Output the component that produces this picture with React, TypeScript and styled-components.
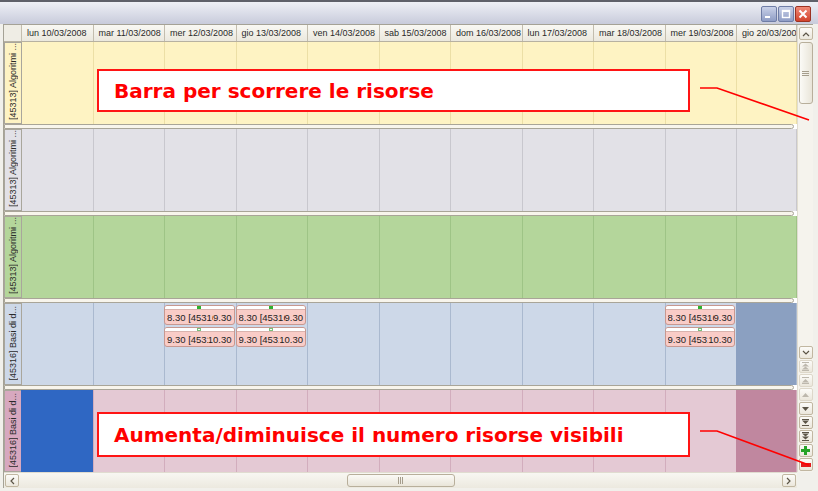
import React from 'react'
import styled, {createGlobalStyle} from 'styled-components'

const GlobalStyle = createGlobalStyle`
  *, *::before, *::after { box-sizing: border-box; }
  html, body { margin: 0; padding: 0; }
  body {
    background: #f1f0eb;
    font-family: "Liberation Sans", Arial, sans-serif;
  }
`

type Tone = 'yellow' | 'grey' | 'green' | 'blue' | 'pink'

const tones: Record<Tone, {bg: string; line: string; label: string}> = {
    yellow: {bg: '#fef3c3', line: '#ecdfa6', label: '#fef3c3'},
    grey: {bg: '#e2e1e7', line: '#c8c7ce', label: '#e2e1e7'},
    green: {bg: '#b4d69b', line: '#9ec486', label: '#b4d69b'},
    blue: {bg: '#cdd8e8', line: '#aab9cf', label: '#cdd8e8'},
    pink: {bg: '#e4c9d4', line: '#d2adbd', label: '#d7a8bf'},
}

const COLS = '18px repeat(10, 71.5px) 1fr'

const Page = styled.div`
  position: relative;
  width: 818px;
  height: 491px;
  overflow: hidden;
  background: #f1f0eb;
`

const TitleBar = styled.div`
  height: 24px;
  border-top: 2px solid #5f616a;
  background: linear-gradient(#eef0f6, #c8cbdb);
  display: flex;
  justify-content: flex-end;
  align-items: flex-end;
  gap: 1px;
  padding: 0 7px 2px 0;
`

const WinButton = styled.div<{$close?: boolean}>`
  width: 16px;
  height: 16px;
  border: 1px solid ${p => p.$close ? '#9c3222' : '#6f7da6'};
  border-radius: 2px;
  background: ${p => p.$close
    ? 'linear-gradient(#f08a78, #d2432c)'
    : 'linear-gradient(#c9d1e8, #8f9dc5)'};
  display: flex;
  align-items: center;
  justify-content: center;
`

const Frame = styled.div`
  margin-left: 3px;
  width: 810px;
  height: 464px;
  border-top: 1px solid #a5a296;
  border-left: 1px solid #a5a296;
  display: grid;
  grid-template-columns: 1fr 16px;
  grid-template-rows: 1fr 16px;
`

const Planner = styled.div`
  display: flex;
  flex-direction: column;
  overflow: hidden;
  background: #fff;
`

const HeaderRow = styled.div`
  display: grid;
  grid-template-columns: ${COLS};
  height: 17px;
  flex-shrink: 0;
  background: linear-gradient(#f9f8f3, #ebe8de);
  border-bottom: 1px solid #b7b1a1;
`

const Corner = styled.div`
  border-right: 1px solid #c3bdae;
  background: #efede5;
`

const DayHead = styled.div`
  border-right: 1px solid #c3bdae;
  padding-left: 5px;
  font-size: 9px;
  line-height: 16px;
  color: #2a2a2a;
  white-space: nowrap;
  overflow: hidden;
`

const ResourceRow = styled.div<{$tone: Tone}>`
  display: grid;
  grid-template-columns: ${COLS};
  height: 82px;
  flex-shrink: 0;
  background: ${p => tones[p.$tone].bg};
`

const RowLabel = styled.div<{$tone: Tone}>`
  background: ${p => tones[p.$tone].label};
  border: 1px solid #a9a69c;
  display: flex;
  justify-content: center;
  align-items: flex-end;
  padding-bottom: 3px;
  overflow: hidden;
`

const LabelText = styled.span`
  writing-mode: vertical-rl;
  transform: rotate(180deg);
  font-size: 9px;
  color: #2a2a2a;
  white-space: nowrap;
`

const Cell = styled.div<{$tone: Tone; $fill?: string}>`
  border-right: 1px solid ${p => tones[p.$tone].line};
  background: ${p => p.$fill || 'transparent'};
  display: flex;
  flex-direction: column;
  gap: 2px;
  padding-top: 2px;
  margin-left: -1px;
`

const Appt = styled.div`
  height: 20px;
  border: 1px solid #c79890;
  border-radius: 3px;
  background: #f9ccc7;
  display: flex;
  flex-direction: column;
  overflow: hidden;
  margin-right: 1px;
`

const ApptBar = styled.div`
  height: 4px;
  flex-shrink: 0;
  background: #fff;
  border-bottom: 1px solid #d9b3ad;
  display: flex;
  justify-content: center;
`

const ApptDot = styled.span<{$hollow?: boolean}>`
  width: 4px;
  height: 3px;
  background: ${p => p.$hollow ? '#fff' : '#2fb02f'};
  border: ${p => p.$hollow ? '1px solid #7bbf7b' : 'none'};
`

const ApptText = styled.div`
  flex: 1;
  display: flex;
  align-items: center;
  padding: 0 2px;
  font-size: 9.5px;
  color: #222;
  white-space: nowrap;
  overflow: hidden;
`

const ApptFrom = styled.span`
  flex: 1;
  min-width: 0;
  overflow: hidden;
`

const ApptTo = styled.span`
  flex-shrink: 0;
`

const Splitter = styled.div`
  height: 5px;
  flex-shrink: 0;
  background: #f8f5ec;
  border: 1px solid #a9a598;
  border-radius: 0 3px 3px 0;
  margin-right: 3px;
`

const VScroll = styled.div`
  display: flex;
  flex-direction: column;
  align-items: center;
  padding: 2px 0 1px;
  background: #f5f3ed;
  border-left: 1px solid #e0dcd0;
`

const HScroll = styled.div`
  display: grid;
  grid-template-columns: 14px 1fr 108px 1fr 14px;
  align-items: center;
  padding: 0 1px;
  background: linear-gradient(#f8f7f2, #ece9df);
  border-top: 1px solid #e0dcd0;
`

const ScrollCorner = styled.div`
  background: #f1f0eb;
`

const ScrollBtn = styled.div<{$off?: boolean; $gap?: number}>`
  width: 14px;
  height: 13px;
  flex-shrink: 0;
  margin-top: ${p => p.$gap ?? 0}px;
  border: 1px solid ${p => p.$off ? '#ddd7c9' : '#c1b7a1'};
  border-radius: 2px;
  background: linear-gradient(#fcfbf8, #ebe7dc);
  color: ${p => p.$off ? '#bdb8ad' : '#5b5446'};
  display: flex;
  align-items: center;
  justify-content: center;
`

const Thumb = styled.div<{$horizontal?: boolean}>`
  width: ${p => p.$horizontal ? '108px' : '14px'};
  height: ${p => p.$horizontal ? '13px' : '62px'};
  margin-top: ${p => p.$horizontal ? 0 : 2}px;
  border: 1px solid #b8af9b;
  border-radius: 3px;
  background: ${p => p.$horizontal
    ? 'linear-gradient(#fbfaf6, #e9e5d9)'
    : 'linear-gradient(90deg, #fbfaf6, #e9e5d9)'};
  display: flex;
  align-items: center;
  justify-content: center;
  color: #a59d8c;
`

const Filler = styled.div`
  flex: 1;
`

const Callout = styled.div<{$top: number; $height: number}>`
  position: absolute;
  left: 97px;
  top: ${p => p.$top}px;
  width: 593px;
  height: ${p => p.$height}px;
  border: 2px solid #ff1414;
  background: #fff;
  display: flex;
  align-items: center;
  padding-left: 15px;
  font-family: "DejaVu Sans", Verdana, sans-serif;
  font-weight: bold;
  font-size: 20px;
  color: #ff0000;
  white-space: nowrap;
`

const Leaders = styled.svg`
  position: absolute;
  left: 0;
  top: 0;
  pointer-events: none;
`

type IconKind = 'up' | 'down' | 'left' | 'right' | 'first' | 'pageUp' | 'stepUp' | 'stepDown' | 'pageDown' | 'last' | 'plus' | 'minus'

const Icon: React.FC<{kind: IconKind}> = ({kind}) => {
    switch (kind) {
        case 'up':
            return <svg width="8" height="6" viewBox="0 0 8 6"><polyline points="1,5 4,2 7,5" fill="none" stroke="currentColor" strokeWidth="1.2"/></svg>
        case 'down':
            return <svg width="8" height="6" viewBox="0 0 8 6"><polyline points="1,1 4,4 7,1" fill="none" stroke="currentColor" strokeWidth="1.2"/></svg>
        case 'left':
            return <svg width="6" height="8" viewBox="0 0 6 8"><polyline points="5,1 2,4 5,7" fill="none" stroke="currentColor" strokeWidth="1.2"/></svg>
        case 'right':
            return <svg width="6" height="8" viewBox="0 0 6 8"><polyline points="1,1 4,4 1,7" fill="none" stroke="currentColor" strokeWidth="1.2"/></svg>
        case 'first':
            return <svg width="7" height="9" viewBox="0 0 7 9" fill="currentColor"><rect x="0" y="0" width="7" height="1"/><path d="M3.5 1.5 L7 4.5 H0Z"/><path d="M3.5 4.5 L7 7.5 H0Z"/><rect x="0" y="8" width="7" height="1"/></svg>
        case 'pageUp':
            return <svg width="7" height="7" viewBox="0 0 7 7" fill="currentColor"><rect x="0" y="0" width="7" height="1"/><path d="M3.5 2 L7 5.5 H0Z"/><rect x="0" y="6" width="7" height="1"/></svg>
        case 'stepUp':
            return <svg width="7" height="4" viewBox="0 0 7 4" fill="currentColor"><path d="M3.5 0 L7 4 H0Z"/></svg>
        case 'stepDown':
            return <svg width="7" height="4" viewBox="0 0 7 4" fill="currentColor"><path d="M0 0 H7 L3.5 4Z"/></svg>
        case 'pageDown':
            return <svg width="7" height="7" viewBox="0 0 7 7" fill="currentColor"><rect x="0" y="0" width="7" height="1"/><path d="M0 1.5 H7 L3.5 5Z"/><rect x="0" y="6" width="7" height="1"/></svg>
        case 'last':
            return <svg width="7" height="9" viewBox="0 0 7 9" fill="currentColor"><rect x="0" y="0" width="7" height="1"/><path d="M0 1.5 H7 L3.5 4.5Z"/><path d="M0 4.5 H7 L3.5 7.5Z"/><rect x="0" y="8" width="7" height="1"/></svg>
        case 'plus':
            return <svg width="9" height="9" viewBox="0 0 9 9" fill="#26a326"><rect x="3" y="0" width="3" height="9"/><rect x="0" y="3" width="9" height="3"/></svg>
        case 'minus':
            return <svg width="10" height="4" viewBox="0 0 10 4" fill="#e31b1b"><rect x="0" y="0" width="10" height="4"/></svg>
    }
}

const Grip: React.FC<{horizontal?: boolean}> = ({horizontal}) => horizontal
    ? <svg width="5" height="7" viewBox="0 0 5 7" fill="currentColor"><rect x="0" y="0" width="1" height="7"/><rect x="2" y="0" width="1" height="7"/><rect x="4" y="0" width="1" height="7"/></svg>
    : <svg width="7" height="5" viewBox="0 0 7 5" fill="currentColor"><rect x="0" y="0" width="7" height="1"/><rect x="0" y="2" width="7" height="1"/><rect x="0" y="4" width="7" height="1"/></svg>

const days = [
    'lun 10/03/2008', 'mar 11/03/2008', 'mer 12/03/2008', 'gio 13/03/2008', 'ven 14/03/2008',
    'sab 15/03/2008', 'dom 16/03/2008', 'lun 17/03/2008', 'mar 18/03/2008', 'mer 19/03/2008',
    'gio 20/03/2008',
]

type Resource = {label: string; tone: Tone; fills?: Record<number, string>; appts?: number[]}

const resources: Resource[] = [
    {label: '[45313] Algoritmi ...', tone: 'yellow'},
    {label: '[45313] Algoritmi ...', tone: 'grey'},
    {label: '[45313] Algoritmi ...', tone: 'green'},
    {label: '[45316] Basi di d...', tone: 'blue', fills: {10: '#8ba0c1'}, appts: [2, 3, 9]},
    {label: '[45316] Basi di d...', tone: 'pink', fills: {0: '#2f67c3', 10: '#c0879f'}},
]

const sideButtons: {kind: IconKind; off?: boolean}[] = [
    {kind: 'first', off: true},
    {kind: 'pageUp', off: true},
    {kind: 'stepUp', off: true},
    {kind: 'stepDown'},
    {kind: 'pageDown'},
    {kind: 'last'},
    {kind: 'plus'},
    {kind: 'minus'},
]

const App: React.FC = () => {
    return (
        <Page>
            <GlobalStyle/>
            <TitleBar>
                <WinButton>
                    <svg width="10" height="10" viewBox="0 0 10 10"><rect x="1" y="7" width="5" height="2" fill="#fff"/></svg>
                </WinButton>
                <WinButton>
                    <svg width="10" height="10" viewBox="0 0 10 10"><rect x="1.5" y="1.5" width="7" height="7" fill="none" stroke="#fff" strokeWidth="1.4"/><rect x="1" y="1" width="8" height="2" fill="#fff"/></svg>
                </WinButton>
                <WinButton $close>
                    <svg width="10" height="10" viewBox="0 0 10 10"><path d="M1.5 1.5 L8.5 8.5 M8.5 1.5 L1.5 8.5" stroke="#fff" strokeWidth="2"/></svg>
                </WinButton>
            </TitleBar>

            <Frame>
                <Planner>
                    <HeaderRow>
                        <Corner/>
                        {days.map(d => <DayHead key={d}>{d}</DayHead>)}
                    </HeaderRow>

                    {resources.map((r, ri) => (
                        <React.Fragment key={ri}>
                            <ResourceRow $tone={r.tone}>
                                <RowLabel $tone={r.tone}>
                                    <LabelText>{r.label}</LabelText>
                                </RowLabel>
                                {days.map((d, ci) => (
                                    <Cell key={d} $tone={r.tone} $fill={r.fills?.[ci]}>
                                        {r.appts?.includes(ci) && (
                                            <>
                                                <Appt>
                                                    <ApptBar><ApptDot/></ApptBar>
                                                    <ApptText><ApptFrom>8.30 [45316</ApptFrom><ApptTo>9.30</ApptTo></ApptText>
                                                </Appt>
                                                <Appt>
                                                    <ApptBar><ApptDot $hollow/></ApptBar>
                                                    <ApptText><ApptFrom>9.30 [45316</ApptFrom><ApptTo>10.30</ApptTo></ApptText>
                                                </Appt>
                                            </>
                                        )}
                                    </Cell>
                                ))}
                            </ResourceRow>
                            {ri < resources.length - 1 && <Splitter/>}
                        </React.Fragment>
                    ))}
                </Planner>

                <VScroll>
                    <ScrollBtn><Icon kind="up"/></ScrollBtn>
                    <Thumb><Grip/></Thumb>
                    <Filler/>
                    <ScrollBtn><Icon kind="down"/></ScrollBtn>
                    {sideButtons.map(b => (
                        <ScrollBtn key={b.kind} $off={b.off} $gap={1}><Icon kind={b.kind}/></ScrollBtn>
                    ))}
                </VScroll>

                <HScroll>
                    <ScrollBtn><Icon kind="left"/></ScrollBtn>
                    <div/>
                    <Thumb $horizontal><Grip horizontal/></Thumb>
                    <div/>
                    <ScrollBtn><Icon kind="right"/></ScrollBtn>
                </HScroll>

                <ScrollCorner/>
            </Frame>

            <Callout $top={69} $height={43}>Barra per scorrere le risorse</Callout>
            <Callout $top={412} $height={45}>Aumenta/diminuisce il numero risorse visibili</Callout>

            <Leaders width="818" height="491">
                <polyline points="700,88 717,88 809,120" fill="none" stroke="#ff0000" strokeWidth="1.6"/>
                <polyline points="700,431 717,431 809,465" fill="none" stroke="#ff0000" strokeWidth="1.6"/>
            </Leaders>
        </Page>
    )
}

export default App
